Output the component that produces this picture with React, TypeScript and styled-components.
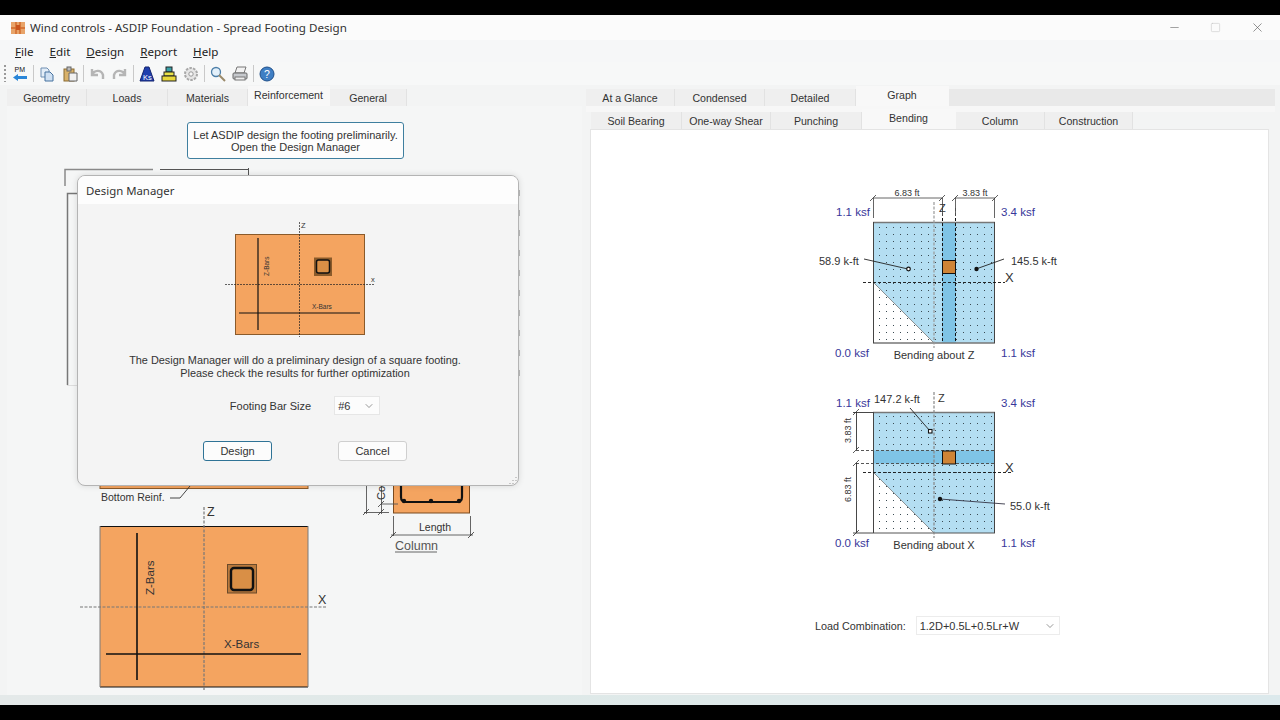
import React from 'react';
import styled, { createGlobalStyle } from 'styled-components';
import { Minus, Square, X, ChevronDown } from 'lucide-react';

const GlobalStyle = createGlobalStyle`
  html, body { margin: 0; padding: 0; background: #000; }
  * { box-sizing: border-box; }
`;

const UI_FONT = `"Liberation Sans", Arial, sans-serif`;
const TITLE_FONT = `"Noto Sans", "Open Sans", sans-serif`;

const Screen = styled.div`
  width: 1280px;
  height: 720px;
  padding: 15px 0;
  background: #000;
  overflow: hidden;
`;

const Win = styled.div`
  height: 690px;
  display: flex;
  flex-direction: column;
  background: #f3f4f4;
  font-family: ${UI_FONT};
  color: #2b2b2b;
`;

const TitleBar = styled.div`
  height: 25px;
  flex: none;
  display: flex;
  align-items: center;
  padding-left: 11px;
  background: #fbfbfb;
  font-family: ${TITLE_FONT};
  font-size: 11.6px;
  color: #333;
`;

const TitleText = styled.span`
  margin-left: 5px;
  flex: 1;
`;

const WinButtons = styled.div`
  display: flex;
  align-items: center;
  gap: 29px;
  padding-right: 15px;
  color: #555;
`;

const MenuBar = styled.div`
  height: 22px;
  flex: none;
  display: flex;
  align-items: center;
  padding-left: 15px;
  gap: 16px;
  background: #f6f7f8;
  font-family: ${TITLE_FONT};
  font-size: 11.6px;
  color: #222;
`;

const MenuItem = styled.span`
  &::first-letter { text-decoration: underline; }
`;

const ToolBar = styled.div`
  height: 23px;
  flex: none;
  display: flex;
  align-items: center;
  padding-left: 4px;
  background: #f7f8f8;
`;

const Grip = styled.div`
  width: 2px;
  height: 17px;
  margin-right: 6px;
  background: repeating-linear-gradient(to bottom, #9a9a9a 0 2px, transparent 2px 4px);
`;

const ToolSep = styled.div`
  width: 1px;
  height: 17px;
  margin: 0 5px;
  background: #c9c9c9;
`;

const ToolIcon = styled.svg<{ $gap?: number }>`
  width: 16px;
  height: 16px;
  flex: none;
  margin-right: ${(p) => p.$gap ?? 0}px;
`;

const Panes = styled.div`
  flex: 1;
  min-height: 0;
  display: grid;
  grid-template-columns: 585px 1fr;
`;

const LeftPane = styled.div`
  display: flex;
  flex-direction: column;
  padding: 4px 3px 0 7px;
`;

const RightPane = styled.div`
  display: flex;
  flex-direction: column;
  padding: 4px 5px 0 1px;
`;

const TabStrip = styled.div<{ $fill?: string; $inset?: number }>`
  height: 17px;
  flex: none;
  display: flex;
  background: ${(p) => p.$fill ?? 'transparent'};
  padding-left: ${(p) => p.$inset ?? 0}px;
`;

const Tab = styled.div<{ $w: number; $active?: boolean }>`
  width: ${(p) => p.$w}px;
  height: ${(p) => (p.$active ? 20 : 17)}px;
  margin-top: ${(p) => (p.$active ? -3 : 0)}px;
  padding-bottom: ${(p) => (p.$active ? 3 : 0)}px;
  display: flex;
  align-items: center;
  justify-content: center;
  font-size: 10.6px;
  color: #333;
  background: ${(p) => (p.$active ? '#f8f8f8' : '#efefef')};
  border-right: 1px solid ${(p) => (p.$active ? 'transparent' : '#e2e2e2')};
  position: relative;
`;

const Sheet = styled.div`
  flex: 1;
  min-height: 0;
  position: relative;
  background: #f5f6f6;
`;

const HintButton = styled.div`
  width: 217px;
  height: 37px;
  margin: 16px 0 0 180px;
  display: flex;
  flex-direction: column;
  align-items: center;
  justify-content: center;
  border: 1.5px solid #3f7f9f;
  border-radius: 3px;
  background: #fdfdfd;
  font-size: 11px;
  line-height: 12px;
  color: #333;
`;

const BackDrawing = styled.svg`
  display: block;
  width: 520px;
  height: 536px;
  margin-left: 53px;
`;

const Dialog = styled.div`
  position: absolute;
  left: 70px;
  top: 69px;
  width: 442px;
  height: 311px;
  display: flex;
  flex-direction: column;
  border: 1px solid #b4b4b4;
  border-radius: 8px;
  overflow: hidden;
  background: #f4f4f4;
  box-shadow: 0 0 6px rgba(0, 0, 0, 0.12);
`;

const DialogTitle = styled.div`
  height: 28px;
  flex: none;
  display: flex;
  align-items: center;
  padding-left: 8px;
  background: #fdfdfd;
  font-family: ${TITLE_FONT};
  font-size: 11.4px;
  color: #333;
`;

const DialogBody = styled.div`
  flex: 1;
  display: flex;
  flex-direction: column;
  align-items: center;
  position: relative;
`;

const MiniDrawing = styled.svg`
  display: block;
  width: 170px;
  height: 124px;
  margin: 14px 0 0 3px;
`;

const DialogText = styled.div`
  margin: 12px 6px 0 0;
  text-align: center;
  font-size: 10.9px;
  line-height: 12.5px;
  color: #333;
`;

const BarRow = styled.div`
  display: flex;
  align-items: center;
  margin: 17px 0 0 14px;
  font-size: 11px;
  color: #333;
`;

const Combo = styled.div<{ $w: number }>`
  width: ${(p) => p.$w}px;
  height: 19px;
  display: flex;
  align-items: center;
  justify-content: space-between;
  padding: 0 4px 0 3px;
  background: #fcfcfc;
  border: 1px solid #e6e6e6;
  font-size: 11px;
  color: #333;
`;

const BarCombo = styled(Combo)`
  margin-left: 23px;
`;

const ButtonRow = styled.div`
  display: flex;
  gap: 66px;
  margin: 26px 0 0 14px;
`;

const DlgButton = styled.div<{ $primary?: boolean }>`
  width: 69px;
  height: 20px;
  display: flex;
  align-items: center;
  justify-content: center;
  background: #fcfcfc;
  border: 1px solid ${(p) => (p.$primary ? '#2f7396' : '#cfcfcf')};
  border-radius: 3px;
  font-size: 11px;
  color: #333;
`;

const ResizeGrip = styled.svg`
  position: absolute;
  right: 0;
  bottom: 0;
  width: 10px;
  height: 10px;
`;

const Sub = styled.div`
  height: 6px;
  flex: none;
  background: #f7f7f7;
`;

const ResultPanel = styled.div`
  flex: 1;
  min-height: 0;
  margin: 0 6px 1px 4px;
  padding: 50px 0 0 210px;
  background: #fff;
  border: 1px solid #e4e4e4;
  display: flex;
  flex-direction: column;
`;

const Chart = styled.svg`
  display: block;
  flex: none;
  width: 270px;
  height: 190px;
  margin-bottom: 10px;
`;

const LoadRow = styled.div`
  display: flex;
  align-items: center;
  margin: 36px 0 0 14px;
  font-size: 10.8px;
  color: #333;
`;

const LoadCombo = styled(Combo)`
  margin-left: 10px;
  padding: 0 3px 0 3px;
  border-color: #ececec;
  background: #fff;
  font-size: 11px;
`;

const BottomStrip = styled.div`
  height: 10px;
  flex: none;
  background: linear-gradient(to right, #e4e9e9, #dfe9e8 40%, #dce9ec);
`;

const Lbl = styled.text<{ $size?: number; $color?: string }>`
  font-family: ${UI_FONT};
  font-size: ${(p) => p.$size ?? 11}px;
  fill: ${(p) => p.$color ?? '#333'};
`;

const Ksf = styled(Lbl).attrs({ $color: '#37379a', $size: 11.5 })``;

const GRID = '#8a8a8a';

// dim line tick, the slashed end mark on every dimension
const Tick = ({ x, y }: { x: number; y: number }) => (
  <path d={`M${x - 3} ${y + 3} L${x + 3} ${y - 3}`} stroke="#333" strokeWidth={0.8} />
);

const Dots = ({ id }: { id: string }) => (
  <pattern id={id} x="0" y="0" width="7" height="7" patternUnits="userSpaceOnUse">
    <rect x="3" y="3" width="1" height="1" fill="#3a4a52" />
  </pattern>
);

const BendingZ = () => (
  <Chart viewBox="800 180 270 190">
    <defs><Dots id="dotsZ" /></defs>
    <rect x="872" y="222" width="122" height="121" fill="#b4def2" />
    <polygon points="872,282 933,343 872,343" fill="#fff" />
    <rect x="941" y="222" width="14" height="121" fill="#7fc4e6" />
    <rect x="872" y="222" width="122" height="121" fill="url(#dotsZ)" />
    <rect x="941" y="222" width="14" height="121" fill="#7fc4e6" />
    <path d="M872 282 L933 343" stroke="#777" strokeWidth={0.8} />
    <path d="M872 222.5 H994 M872 343 H994" stroke="#777" strokeWidth={1.5} fill="none" />
    <path d="M872.5 222 V343 M993.5 222 V343" stroke="#444" strokeWidth={1} fill="none" />
    <path d="M941.5 208 V343 M954.5 208 V343" stroke="#111" strokeWidth={1} strokeDasharray="3 2" fill="none" />
    <rect x="941.5" y="260.5" width="13" height="13" fill="#cf8436" stroke="#111" />
    <path d="M933 202 V348" stroke="#999" strokeWidth={1.2} strokeDasharray="3 1.5" />
    <path d="M862 282.5 H1004" stroke="#111" strokeWidth={0.9} strokeDasharray="3 2" />
    <path d="M872.5 198 V218 M941.5 198 V216 M954.5 198 V216 M993.5 198 V218 M872 198 H941 M954 198 H994" stroke="#555" strokeWidth={0.9} fill="none" />
    <Tick x={872} y={198} /><Tick x={941} y={198} /><Tick x={954} y={198} /><Tick x={994} y={198} />
    <Lbl x="906" y="195.5" $size={9} textAnchor="middle">6.83 ft</Lbl>
    <Lbl x="974" y="195.5" $size={9} textAnchor="middle">3.83 ft</Lbl>
    <Lbl x="938" y="212" $size={11}>Z</Lbl>
    <Ksf x="835" y="216">1.1 ksf</Ksf>
    <Ksf x="1000" y="216">3.4 ksf</Ksf>
    <Ksf x="834" y="357">0.0 ksf</Ksf>
    <Ksf x="1000" y="357">1.1 ksf</Ksf>
    <Lbl x="933" y="359" $size={11} textAnchor="middle">Bending about Z</Lbl>
    <Lbl x="818" y="265" $size={11}>58.9 k-ft</Lbl>
    <Lbl x="1010" y="265" $size={11}>145.5 k-ft</Lbl>
    <Lbl x="1004" y="282" $size={13}>X</Lbl>
    <path d="M863 259 L907 269" stroke="#222" strokeWidth={0.9} />
    <path d="M1003 259 L975 269" stroke="#222" strokeWidth={0.9} />
    <circle cx="907.5" cy="269" r="1.8" fill="#fff" stroke="#111" strokeWidth={1.2} />
    <circle cx="975.5" cy="269" r="2.2" fill="#111" />
  </Chart>
);

const BendingX = () => (
  <Chart viewBox="800 380 270 190">
    <defs><Dots id="dotsX" /></defs>
    <rect x="872" y="412" width="122" height="121" fill="#b4def2" />
    <polygon points="872,472 933,533 872,533" fill="#fff" />
    <rect x="872" y="412" width="122" height="121" fill="url(#dotsX)" />
    <rect x="872" y="450.5" width="122" height="13" fill="#7fc4e6" />
    <path d="M872 472 L933 533" stroke="#777" strokeWidth={0.8} />
    <path d="M872 412.5 H994" stroke="#777" strokeWidth={1.5} />
    <path d="M872 533 H994" stroke="#555" strokeWidth={1} />
    <path d="M872.5 412 V533 M993.5 412 V533" stroke="#444" strokeWidth={1} fill="none" />
    <path d="M855 450.5 H994 M855 463.5 H994" stroke="#444" strokeWidth={0.9} strokeDasharray="3 2" fill="none" />
    <rect x="941.5" y="451" width="13" height="13" fill="#cf8436" stroke="#111" />
    <path d="M933 392 V538" stroke="#888" strokeWidth={1.2} strokeDasharray="3 1.5" />
    <path d="M862 472.5 H1012" stroke="#111" strokeWidth={0.9} strokeDasharray="3 2" />
    <path d="M855.5 412 V450 M855.5 463 V533 M852 412.5 H872 M852 533 H872" stroke="#333" strokeWidth={0.9} fill="none" />
    <Tick x={855} y={412} /><Tick x={855} y={450} /><Tick x={855} y={463} /><Tick x={855} y={533} />
    <Lbl transform="translate(850 443) rotate(-90)" $size={9}>3.83 ft</Lbl>
    <Lbl transform="translate(850 502) rotate(-90)" $size={9}>6.83 ft</Lbl>
    <Lbl x="937" y="402" $size={11}>Z</Lbl>
    <Ksf x="835" y="407">1.1 ksf</Ksf>
    <Ksf x="1000" y="407">3.4 ksf</Ksf>
    <Ksf x="834" y="547">0.0 ksf</Ksf>
    <Ksf x="1000" y="547">1.1 ksf</Ksf>
    <Lbl x="933" y="549" $size={11} textAnchor="middle">Bending about X</Lbl>
    <Lbl x="873" y="403" $size={11}>147.2 k-ft</Lbl>
    <Lbl x="1009" y="510" $size={11}>55.0 k-ft</Lbl>
    <Lbl x="1004" y="472" $size={13}>X</Lbl>
    <path d="M909 408 L929 431" stroke="#222" strokeWidth={0.9} />
    <path d="M1004 504 L939 499" stroke="#334" strokeWidth={0.9} />
    <rect x="927.5" y="429.5" width="3.5" height="3.5" fill="#fff" stroke="#111" strokeWidth={1.1} />
    <circle cx="939" cy="499" r="2.2" fill="#111" />
  </Chart>
);

const FootingPlan = ({ scale = 1 }: { scale?: number }) => (
  <g transform={`scale(${scale})`} />
);

const LeftDrawing = () => (
  <BackDrawing viewBox="60 159 520 536">
    <path d="M65 186 V169.5 H153" stroke={GRID} strokeWidth={1.5} fill="none" />
    <path d="M160 169.5 H248 M248.5 168 V176" stroke="#555" strokeWidth={1} fill="none" />
    <path d="M67.5 385 V193.5 H77" stroke="#777" strokeWidth={1.5} fill="none" />
    <path d="M67 385.5 H77" stroke="#ddd" strokeWidth={1} />
    <path d="M519.5 190 V385" stroke="#bbb" strokeWidth={1} strokeDasharray="6 14" />
    <rect x="100" y="480" width="208" height="8.5" fill="#f4a460" stroke="#8a5a2a" strokeWidth={1} />
    <Lbl x="101" y="501" $size={10.5}>Bottom Reinf.</Lbl>
    <path d="M170 498 H180 L190 486" stroke="#333" strokeWidth={0.9} fill="none" />
    <rect x="100" y="526.5" width="208" height="160.5" fill="#f4a460" />
    <path d="M100 526.5 H308 M100 687 H308" stroke="#111" strokeWidth={1} />
    <path d="M100 526 V687 M308 526 V687" stroke="#7a7a7a" strokeWidth={1} />
    <path d="M204 507 V690" stroke="#777" strokeWidth={1.2} strokeDasharray="3 1.5" />
    <path d="M80 607 H326" stroke="#777" strokeWidth={1.2} strokeDasharray="3 1.5" />
    <path d="M137 533 V680 M106 654 H301" stroke="#111" strokeWidth={1.6} />
    <rect x="227.5" y="564.5" width="29" height="28.5" fill="#b9793d" stroke="#6a4a2a" />
    <rect x="231" y="568" width="22" height="22" rx="3" fill="#d98f46" stroke="#111" strokeWidth={2.4} />
    <Lbl x="207" y="516" $size={12.5}>Z</Lbl>
    <Lbl x="318" y="604" $size={12.5}>X</Lbl>
    <Lbl x="224" y="648" $size={11.5}>X-Bars</Lbl>
    <Lbl transform="translate(154 595) rotate(-90)" $size={11.5}>Z-Bars</Lbl>
    <rect x="393.5" y="478" width="76" height="35" fill="#f4a460" stroke="#7a4a1f" />
    <path d="M401 486 V497 Q401 502 406 502 H457 Q462 502 462 497 V486" stroke="#111" strokeWidth={2.2} fill="none" />
    <circle cx="404" cy="501" r="2.2" fill="#111" />
    <circle cx="431" cy="501" r="2.2" fill="#111" />
    <circle cx="459" cy="501" r="2.2" fill="#111" />
    <path d="M366.5 486 V514 M364 512.5 H389 M381.5 486 V514 M381 504 H398" stroke="#555" strokeWidth={0.9} fill="none" />
    <Tick x={366} y={512} /><Tick x={381} y={512} /><Tick x={381} y={504} />
    <Lbl transform="translate(385 500) rotate(-90)" $size={11}>Co</Lbl>
    <path d="M393.5 516 V536 M470.5 516 V536 M391 535 H473" stroke="#555" strokeWidth={0.9} fill="none" />
    <Tick x={393} y={535} /><Tick x={471} y={535} />
    <Lbl x="419" y="531" $size={10.5}>Length</Lbl>
    <Lbl x="395" y="550" $size={12.5} $color="#555">Column</Lbl>
    <path d="M395 552 H437" stroke="#555" strokeWidth={0.9} />
  </BackDrawing>
);

const MiniFooting = () => (
  <MiniDrawing viewBox="215 218 170 124">
    <rect x="235.5" y="234.5" width="129" height="100" fill="#f4a460" stroke="#8a5a2a" />
    <path d="M299.5 222 V337" stroke="#222" strokeWidth={0.7} strokeDasharray="2 1" />
    <path d="M225 284.5 H375" stroke="#222" strokeWidth={0.7} strokeDasharray="2 1" />
    <path d="M258 238 V330 M239 313 H360" stroke="#111" strokeWidth={1.2} />
    <rect x="314" y="257.5" width="18" height="18.5" fill="#8a5a2a" />
    <rect x="316.5" y="260" width="13" height="13" rx="2" fill="#d98f46" stroke="#111" strokeWidth={1.5} />
    <Lbl x="301" y="228" $size={7.5}>Z</Lbl>
    <Lbl x="371" y="282" $size={7.5}>x</Lbl>
    <Lbl x="312" y="309" $size={6.5}>X-Bars</Lbl>
    <Lbl transform="translate(269 276) rotate(-90)" $size={6.5}>Z-Bars</Lbl>
  </MiniDrawing>
);

const AppIcon = () => (
  <svg width="14" height="12" viewBox="0 0 14 12">
    <rect width="14" height="12" fill="#e8a46a" />
    <path d="M5 0 V12 M9 0 V12 M0 6 H14" stroke="#d2682a" strokeWidth={1.4} />
    <rect x="5" y="3" width="4" height="5" fill="#c9541c" />
  </svg>
);

const ToolIcons = () => (
  <>
    <Grip />
    <svg width="16" height="18" viewBox="0 0 16 18" style={{ flex: 'none' }}>
      <Lbl x="2.5" y="7" $size={7} $color="#111">PM</Lbl>
      <path d="M1 12.5 L6 9 V11 H15 V14 H6 V16 Z" fill="#2a86d8" />
    </svg>
    <ToolSep />
    <ToolIcon viewBox="0 0 16 16" $gap={7}>
      <path d="M2 2 H8 L10 4 V11 H2 Z" fill="#e3edf7" stroke="#6f8fb3" />
      <path d="M6 6 H11 L14 9 V15 H6 Z" fill="#cfe0f2" stroke="#46729f" />
    </ToolIcon>
    <ToolIcon viewBox="0 0 16 16">
      <rect x="2" y="3" width="10" height="12" fill="#d9b26a" stroke="#8a6a30" />
      <rect x="5" y="1" width="4" height="4" fill="#bbb" stroke="#666" />
      <path d="M7 7 H15 V15 H7 Z" fill="#f1f1f1" stroke="#666" />
    </ToolIcon>
    <ToolSep />
    <ToolIcon viewBox="0 0 16 16" $gap={7}>
      <path d="M3 3 V9 H9 M3 9 C5 4 12 3 14 9 L14 13" stroke="#b5b5b5" strokeWidth={2.4} fill="none" />
    </ToolIcon>
    <ToolIcon viewBox="0 0 16 16">
      <path d="M13 3 V9 H7 M13 9 C11 4 4 3 2 9 L2 13" stroke="#b5b5b5" strokeWidth={2.4} fill="none" />
    </ToolIcon>
    <ToolSep />
    <ToolIcon viewBox="0 0 16 16" $gap={6}>
      <path d="M6 1 H10 L15 15 H1 Z" fill="#1f3fae" stroke="#14246e" />
      <Lbl x="4" y="13.5" $size={7.5} $color="#fff">Ks</Lbl>
    </ToolIcon>
    <ToolIcon viewBox="0 0 16 16" $gap={6}>
      <rect x="5" y="1" width="6" height="5" fill="#3aa0a8" stroke="#222" />
      <rect x="3" y="6" width="10" height="4" fill="#e8e24a" stroke="#222" />
      <rect x="1" y="10" width="14" height="5" fill="#e8d83a" stroke="#222" />
    </ToolIcon>
    <ToolIcon viewBox="0 0 16 16">
      <circle cx="8" cy="8" r="6" fill="#e6e6e6" stroke="#a8a8a8" strokeWidth={2} strokeDasharray="2.5 1.2" />
      <circle cx="8" cy="8" r="2.2" fill="#f7f7f7" stroke="#999" />
    </ToolIcon>
    <ToolSep />
    <ToolIcon viewBox="0 0 16 16" $gap={6}>
      <circle cx="6" cy="6" r="4.5" fill="#e3f0fa" stroke="#4d7fa8" strokeWidth={1.3} />
      <path d="M9 9 L15 15" stroke="#9a8a6a" strokeWidth={2} />
    </ToolIcon>
    <ToolIcon viewBox="0 0 16 16">
      <path d="M5 1 H14 L12 7 H3 Z" fill="#f2f2f2" stroke="#777" />
      <rect x="1" y="7" width="14" height="6" rx="1" fill="#c6c9cd" stroke="#666" />
      <rect x="3" y="11" width="10" height="3" fill="#eee" stroke="#777" />
    </ToolIcon>
    <ToolSep />
    <ToolIcon viewBox="0 0 16 16">
      <circle cx="8" cy="8" r="7" fill="#3f7fc4" stroke="#1f4f8a" />
      <Lbl x="5" y="12" $size={10.5} $color="#fff">?</Lbl>
    </ToolIcon>
  </>
);

const leftTabs: [string, number][] = [['Geometry', 80], ['Loads', 81], ['Materials', 80], ['Reinforcement', 82], ['General', 77]];
const topTabs: [string, number][] = [['At a Glance', 89], ['Condensed', 90], ['Detailed', 91], ['Graph', 93]];
const subTabs: [string, number][] = [['Soil Bearing', 91], ['One-way Shear', 89], ['Punching', 91], ['Bending', 94], ['Column', 89], ['Construction', 88]];

const App: React.FC = () => (
  <>
    <GlobalStyle />
    <Screen>
      <Win>
        <TitleBar>
          <AppIcon />
          <TitleText>Wind controls - ASDIP Foundation - Spread Footing Design</TitleText>
          <WinButtons>
            <Minus size={13} strokeWidth={1} />
            <Square size={11} strokeWidth={1} color="#bbb" />
            <X size={15} strokeWidth={1} />
          </WinButtons>
        </TitleBar>
        <MenuBar>
          {['File', 'Edit', 'Design', 'Report', 'Help'].map((m) => <MenuItem key={m}>{m}</MenuItem>)}
        </MenuBar>
        <ToolBar><ToolIcons /></ToolBar>
        <Panes>
          <LeftPane>
            <TabStrip>
              {leftTabs.map(([t, w]) => <Tab key={t} $w={w} $active={t === 'Reinforcement'}>{t}</Tab>)}
            </TabStrip>
            <Sheet>
              <HintButton>
                <span>Let ASDIP design the footing preliminarily.</span>
                <span>Open the Design Manager</span>
              </HintButton>
              <LeftDrawing />
              <Dialog>
                <DialogTitle>Design Manager</DialogTitle>
                <DialogBody>
                  <MiniFooting />
                  <DialogText>
                    The Design Manager will do a preliminary design of a square footing.<br />
                    Please check the results for further optimization
                  </DialogText>
                  <BarRow>
                    Footing Bar Size
                    <BarCombo $w={46}>#6<ChevronDown size={12} strokeWidth={1} /></BarCombo>
                  </BarRow>
                  <ButtonRow>
                    <DlgButton $primary>Design</DlgButton>
                    <DlgButton>Cancel</DlgButton>
                  </ButtonRow>
                  <ResizeGrip viewBox="0 0 10 10">
                    <path d="M8 2 V3 M5 5 V6 M8 5 V6 M2 8 V9 M5 8 V9 M8 8 V9" stroke="#999" strokeWidth={1} />
                  </ResizeGrip>
                </DialogBody>
              </Dialog>
            </Sheet>
          </LeftPane>
          <RightPane>
            <TabStrip $fill="#e9e9e9">
              {topTabs.map(([t, w]) => <Tab key={t} $w={w} $active={t === 'Graph'}>{t}</Tab>)}
            </TabStrip>
            <Sub />
            <TabStrip $inset={5}>
              {subTabs.map(([t, w]) => <Tab key={t} $w={w} $active={t === 'Bending'}>{t}</Tab>)}
            </TabStrip>
            <ResultPanel>
              <BendingZ />
              <BendingX />
              <LoadRow>
                Load Combination:
                <LoadCombo $w={144}>1.2D+0.5L+0.5Lr+W<ChevronDown size={12} strokeWidth={1} /></LoadCombo>
              </LoadRow>
            </ResultPanel>
          </RightPane>
        </Panes>
        <BottomStrip />
      </Win>
    </Screen>
  </>
);

export default App;
